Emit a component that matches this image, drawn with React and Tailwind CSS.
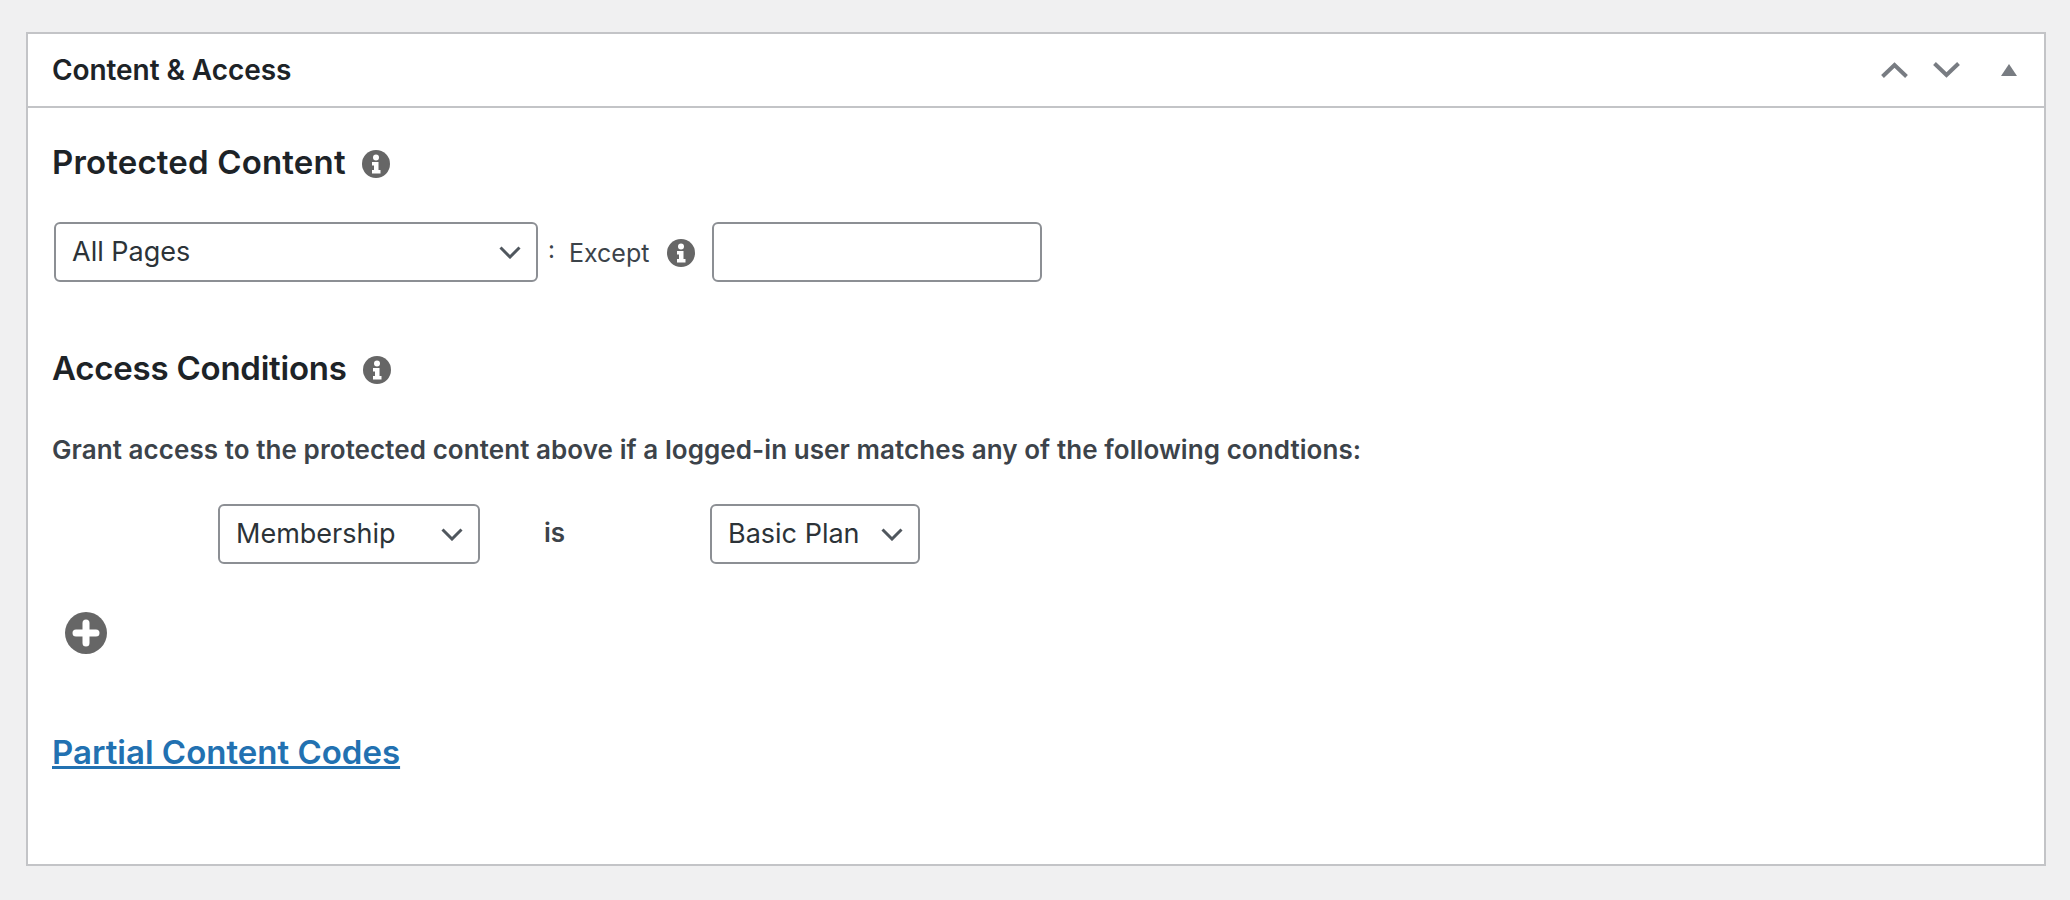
function InfoIcon({ className = '' }) {
  return (
    <svg className={`w-[28px] h-[28px] ${className}`} viewBox="0 0 28 28">
      <circle cx="14" cy="14" r="14" fill="#666" />
      <circle cx="14" cy="7.5" r="3" fill="#fff" />
      <path d="M10 12h6.5v8H18.5v3.5H10V20h2v-4.5h-2z" fill="#fff" />
    </svg>
  )
}

function PlusIcon() {
  return (
    <svg className="w-[42px] h-[42px]" viewBox="0 0 42 42">
      <circle cx="21" cy="21" r="21" fill="#666" />
      <path d="M21 11v20M11 21h20" stroke="#fff" strokeWidth="7" strokeLinecap="round" />
    </svg>
  )
}

function Select({ label, className }) {
  return (
    <div className={`h-[60px] bg-white border-2 border-[#8c8f94] rounded-[6px] flex items-center justify-between pl-[16px] pr-[15px] text-[27px] text-[#2c3338] ${className}`}>
      <span className="mt-[1px]">{label}</span>
      <svg className="w-[22px] h-[13px] text-[#50575e]" viewBox="0 0 22 13" fill="none" stroke="currentColor" strokeWidth="3"><path d="M1.5 1.5 11 11l9.5-9.5" /></svg>
    </div>
  )
}

export default function App() {
  return (
    <div className="min-h-[900px] bg-[#f0f0f1] pt-[32px] pl-[26px] pr-[24px] font-['Inter',sans-serif]">
      <div className="h-[834px] bg-white border-2 border-[#c3c4c7]">
        <div className="h-[74px] border-b-2 border-[#c3c4c7] flex items-center justify-between pl-[24px] pr-[27px]">
          <h2 className="text-[28px] font-semibold tracking-[-0.08px] text-[#1d2327]">Content &amp; Access</h2>
          <div className="flex items-center">
            <svg className="w-[27px] h-[16px] text-[#787c82] mr-[25px]" viewBox="0 0 27 16" fill="none" stroke="currentColor" strokeWidth="4"><path d="M1.5 14.5 13.5 3l12 11.5" /></svg>
            <svg className="w-[27px] h-[16px] text-[#787c82] mr-[41px]" viewBox="0 0 27 16" fill="none" stroke="currentColor" strokeWidth="4"><path d="M1.5 1.5 13.5 13l12-11.5" /></svg>
            <svg className="w-[16px] h-[12px] text-[#787c82]" viewBox="0 0 16 12" fill="currentColor"><path d="M8 0l8 12H0z" /></svg>
          </div>
        </div>
        <div className="pl-[24px] pt-[35px]">
          <div className="flex items-center gap-[16px] h-[40px]">
            <h3 className="text-[33px] font-semibold tracking-[0.17px] text-[#1d2327]">Protected Content</h3>
            <InfoIcon className="mt-[2px]" />
          </div>
          <div className="flex items-center mt-[39px] ml-[2px]">
            <Select label="All Pages" className="w-[484px]" />
            <span className="text-[24px] text-[#3c434a] ml-[10px] -mt-[4px]">:</span>
            <span className="text-[25px] text-[#3c434a] ml-[14px] mt-[4px]">Except</span>
            <div className="ml-[18px] mr-[17px] mt-[2px] flex"><InfoIcon /></div>
            <div className="w-[330px] h-[60px] border-2 border-[#8c8f94] rounded-[6px]" />
          </div>
          <div className="flex items-center gap-[16px] h-[40px] mt-[67px]">
            <h3 className="text-[33px] font-semibold tracking-[-0.23px] text-[#1d2327]">Access Conditions</h3>
            <InfoIcon className="mt-[2px]" />
          </div>
          <p className="text-[26px] font-semibold tracking-[0.07px] text-[#3c434a] mt-[41px]">Grant access to the protected content above if a logged-in user matches any of the following condtions:</p>
          <div className="flex items-center mt-[35px] ml-[166px]">
            <Select label="Membership" className="w-[262px]" />
            <span className="w-[166px] text-[26px] font-semibold text-[#3c434a] ml-[64px] -mt-[4px]">is</span>
            <Select label="Basic Plan" className="w-[210px]" />
          </div>
          <div className="mt-[48px] ml-[13px] flex"><PlusIcon /></div>
          <a href="#" className="block mt-[74px] text-[33px] font-semibold text-[#2271b1] underline">Partial Content Codes</a>
        </div>
      </div>
    </div>
  )
}
